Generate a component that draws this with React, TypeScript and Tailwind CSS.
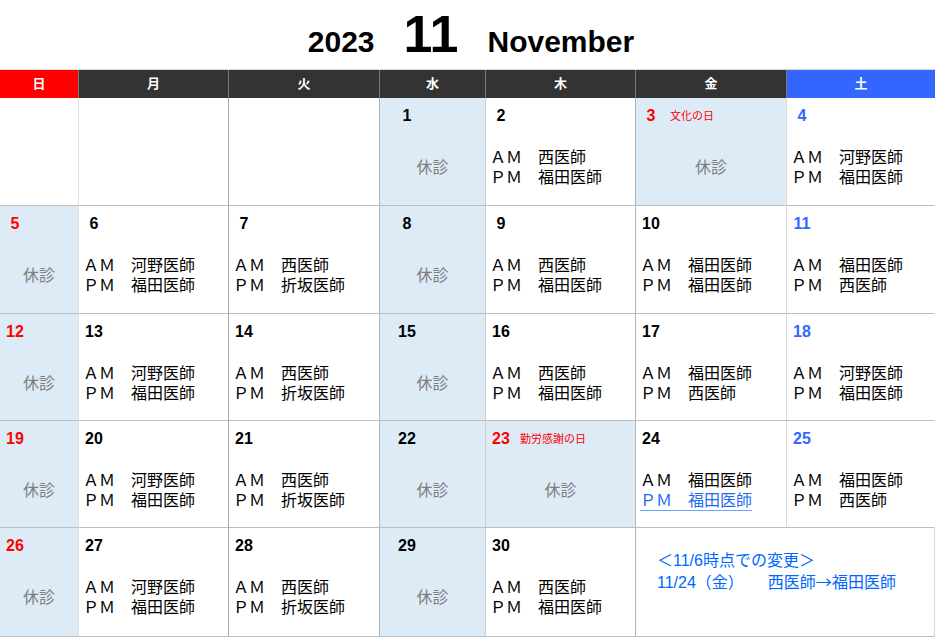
type Cell =
  | { kind: 'empty' }
  | { kind: 'closed'; date: number; holiday?: string }
  | { kind: 'open'; date: number; am: string; pm: string; changed?: boolean }
  | { kind: 'note' }

const empty: Cell = { kind: 'empty' }
const closed = (date: number, holiday?: string): Cell => ({ kind: 'closed', date, holiday })
const open = (date: number, am: string, pm: string, changed?: boolean): Cell => ({ kind: 'open', date, am, pm, changed })

const weeks: Cell[][] = [
  [empty, empty, empty, closed(1), open(2, '西医師', '福田医師'), closed(3, '文化の日'), open(4, '河野医師', '福田医師')],
  [closed(5), open(6, '河野医師', '福田医師'), open(7, '西医師', '折坂医師'), closed(8), open(9, '西医師', '福田医師'), open(10, '福田医師', '福田医師'), open(11, '福田医師', '西医師')],
  [closed(12), open(13, '河野医師', '福田医師'), open(14, '西医師', '折坂医師'), closed(15), open(16, '西医師', '福田医師'), open(17, '福田医師', '西医師'), open(18, '河野医師', '福田医師')],
  [closed(19), open(20, '河野医師', '福田医師'), open(21, '西医師', '折坂医師'), closed(22), closed(23, '勤労感謝の日'), open(24, '福田医師', '福田医師', true), open(25, '福田医師', '西医師')],
  [closed(26), open(27, '河野医師', '福田医師'), open(28, '西医師', '折坂医師'), closed(29), open(30, '西医師', '福田医師'), { kind: 'note' }],
]

const days = ['日', '月', '火', '水', '木', '金', '土']
const headBg = ['bg-[#ff0000]', 'bg-[#333333]', 'bg-[#333333]', 'bg-[#333333]', 'bg-[#333333]', 'bg-[#333333]', 'bg-[#3366ff]']
const vline = [
  'border-r-[#e0e0e0]',
  'border-r-[#a9a9a9]',
  'border-r-[#b4b4b4]',
  'border-r-[#cccccc]',
  'border-r-[#b4b4b4]',
  'border-r-[#d9d9d9]',
  'border-r-transparent',
]

const jp = "font-['Liberation_Sans','Noto_Sans_CJK_JP',sans-serif]"

function DateRow({ date, col, holiday }: { date: number; col: number; holiday?: string }) {
  const color = col === 0 || holiday ? 'text-[#ff0000]' : col === 6 ? 'text-[#3366ff]' : 'text-black'
  return (
    <div className={`flex items-center h-5 ${col === 3 ? 'pl-[17px]' : 'pl-[5px]'}`}>
      <span className={`w-5 text-center text-[16px] font-bold leading-5 ${color}`}>{date}</span>
      {holiday && <span className="ml-[9px] text-[11px] text-[#ff0000] leading-5">{holiday}</span>}
    </div>
  )
}

function CalendarCell({ cell, col }: { cell: Cell; col: number }) {
  const base = `border-r border-b border-b-[#bdbdbd] ${vline[col]}`
  if (cell.kind === 'empty') return <div className={`${base} bg-white`} />
  if (cell.kind === 'note') {
    return (
      <div className={`${base} col-span-2 bg-white pl-[21px] pt-[22px] text-[16px] leading-[21px] text-[#0066ff]`}>
        <div>＜11/6時点での変更＞</div>
        <div>
          11/24（金）　　西医師<span className="font-['Noto_Sans_CJK_JP',sans-serif]">→</span>福田医師
        </div>
      </div>
    )
  }
  if (cell.kind === 'closed') {
    return (
      <div className={`${base} bg-[#ddebf7] pt-[8px]`}>
        <DateRow date={cell.date} col={col} holiday={cell.holiday} />
        <div className="mt-[22px] h-10 flex items-center justify-center text-[16px] text-[#7f7f7f]">休診</div>
      </div>
    )
  }
  return (
    <div className={`${base} bg-white pt-[8px]`}>
      <DateRow date={cell.date} col={col} />
      <div className="mt-[22px] pl-[4px] text-[16px] leading-5 text-black whitespace-nowrap">
        <div>ＡＭ　{cell.am}</div>
        <div>
          {cell.changed ? (
            <span className="text-[#1f6bf0] underline underline-offset-[4px] decoration-[#6aa5ff]">ＰＭ　{cell.pm}</span>
          ) : (
            <>ＰＭ　{cell.pm}</>
          )}
        </div>
      </div>
    </div>
  )
}

export default function App() {
  return (
    <div className={`w-[938px] h-[637px] overflow-hidden bg-white ${jp}`}>
      <div className="h-[69px] flex items-baseline justify-center gap-[29px] pt-[8px] pl-[4px] text-black font-bold font-['Liberation_Sans',sans-serif]">
        <span className="text-[30px] leading-none">2023</span>
        <span className="text-[52px] leading-none">11</span>
        <span className="text-[30px] leading-none">November</span>
      </div>

      <div className="w-[935px] border-t border-[#d9d9d9] grid grid-cols-[79px_150px_151px_106px_150px_151px_148px] grid-rows-[28px_108px_108px_107px_107px_109px]">
        {days.map((d, i) => (
          <div
            key={d}
            className={`${headBg[i]} ${i < 6 ? 'border-r border-r-[#7a7a7a]' : ''} flex items-center justify-center text-[13px] font-bold text-white`}
          >
            {d}
          </div>
        ))}
        {weeks.map((week, w) =>
          week.map((cell, c) => <CalendarCell key={`${w}-${c}`} cell={cell} col={c} />)
        )}
      </div>
    </div>
  )
}
